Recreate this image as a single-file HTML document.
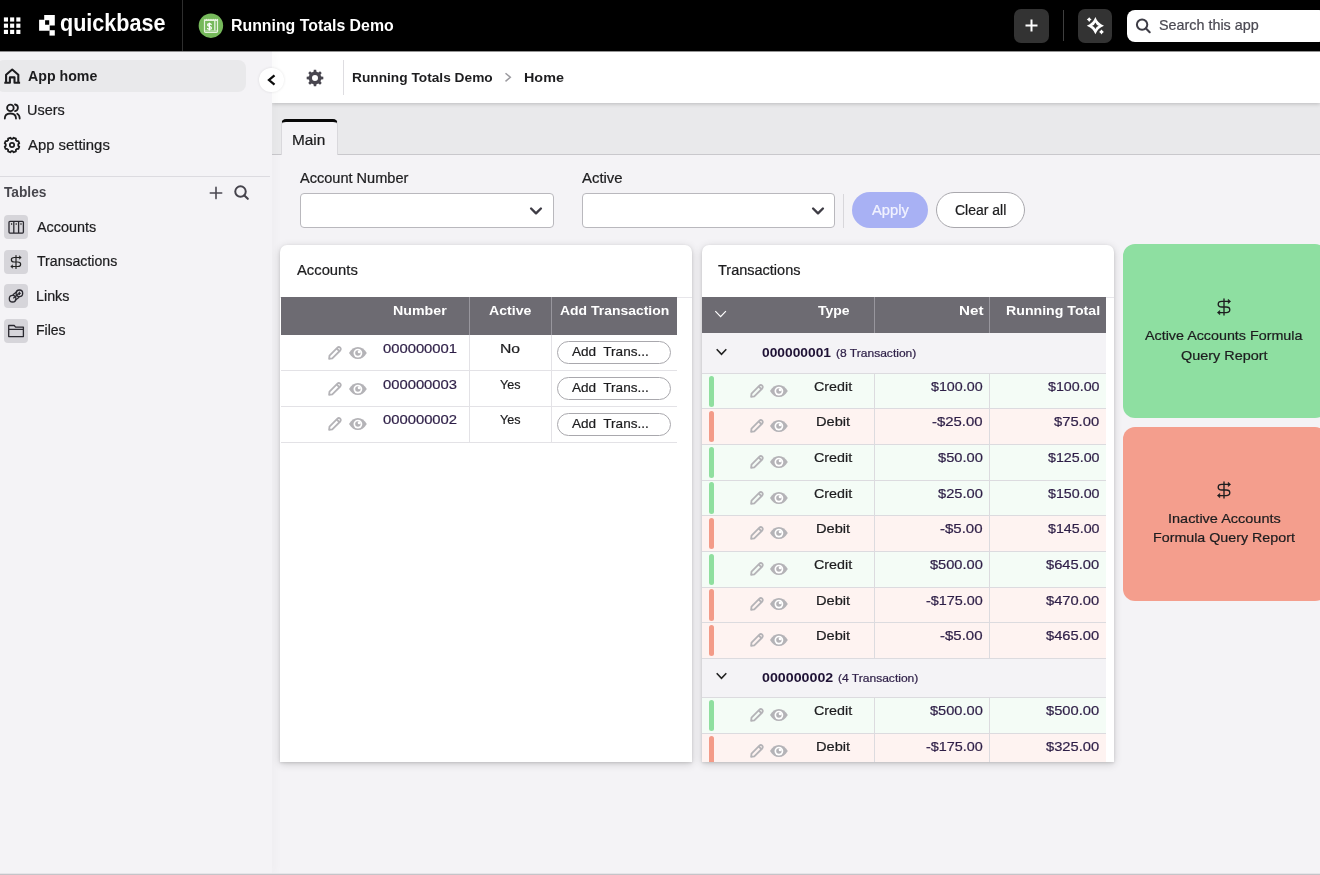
<!DOCTYPE html>
<html lang="en">
<head>
<meta charset="utf-8">
<title>Running Totals Demo</title>
<style>
*{box-sizing:border-box;margin:0;padding:0}
html,body{width:1320px;height:875px;overflow:hidden;background:#f4f3f6;font-family:"Liberation Sans",sans-serif;color:#1d1d1f}
.a{position:absolute}
.t{position:absolute;white-space:nowrap;line-height:1;-webkit-text-stroke:.22px currentColor}
svg{position:absolute;overflow:visible}
#tx{position:absolute;left:0;top:0;width:1320px;height:875px;will-change:transform}
#top{left:0;top:0;width:1320px;height:51px;background:#000}
#side{left:0;top:51px;width:272px;height:824px;background:#f4f3f6}
#sideborder{left:270px;top:51px;width:2px;height:824px;background:#e6e5e9;box-shadow:1px 0 8px rgba(0,0,0,.09)}
#crumb{left:272px;top:51px;width:1048px;height:52px;background:#fff;box-shadow:0 1px 4px rgba(0,0,0,.2)}
#tabbar{left:272px;top:103px;width:1048px;height:52px;background:#e9e9eb;border-bottom:1px solid #c9c8cc}
#bottomline{left:0;top:873px;width:1320px;height:2px;background:linear-gradient(#e6e5e9 0,#e6e5e9 50%,#c5c4c8 50%)}
.card{background:#fff;border-radius:7px 7px 0 0;box-shadow:0 1px 3px rgba(0,0,0,.12),0 2px 9px rgba(0,0,0,.16)}
.th{background:#6d6b72}
.tile{border-radius:12px}
.pill{border:1px solid #a9a8ad;border-radius:18px;background:#fff}
.dd{border:1px solid #b9b8bd;border-radius:4px;background:#fff;width:254px;height:34px;top:193px}
.ib{left:4px;width:24px;height:24px;border-radius:4px;background:#d6d5da}
.hl{height:1px;background:#dddce0}
.vl{width:1px;background:#dddce0}
.gr{background:#f4fcf6}
.rd{background:#fef3f1}
.bar{width:4.5px;border-radius:2.5px}
</style>
</head>
<body>
<div class="a" id="top"></div>
<div class="a" id="tabbar"></div>
<div class="a" id="crumb"></div>
<div class="a" id="sideborder"></div>
<div class="a" id="side"></div>
<svg style="left:0;top:0" width="30" height="51" viewBox="0 0 30 51"><rect x="3.90" y="17.40" width="4.1" height="4.2" fill="#fff"/><rect x="10.10" y="17.40" width="4.1" height="4.2" fill="#fff"/><rect x="16.30" y="17.40" width="4.1" height="4.2" fill="#fff"/><rect x="3.90" y="23.60" width="4.1" height="4.2" fill="#fff"/><rect x="10.10" y="23.60" width="4.1" height="4.2" fill="#fff"/><rect x="16.30" y="23.60" width="4.1" height="4.2" fill="#fff"/><rect x="3.90" y="29.80" width="4.1" height="4.2" fill="#fff"/><rect x="10.10" y="29.80" width="4.1" height="4.2" fill="#fff"/><rect x="16.30" y="29.80" width="4.1" height="4.2" fill="#fff"/></svg>
<svg style="left:39px;top:15px" width="16" height="21" viewBox="39 15 16 21">
<path fill="#fff" fill-rule="evenodd" d="M44.2 15H54.8V25.4H49.7V30.7H39.1V19.8H44.2ZM45.1 20.3V24.7H49.2V20.3Z"/>
<rect fill="#fff" x="49.5" y="30.2" width="5.3" height="5.4"/></svg>
<div class="a" style="left:182px;top:0px;width:1px;height:51px;background:#2e2e2e"></div>
<svg style="left:198px;top:13px" width="26" height="26" viewBox="198 13 26 26">
<circle cx="210.9" cy="25.65" r="12.25" fill="#76b95b"/>
<path fill="none" stroke="#e6f3df" stroke-width="1.2" stroke-linejoin="round" d="M204.5 19.4l1.083 1 1.083-1l1.083 1 1.083-1l1.083 1 1.083-1l1.083 1 1.083-1l1.083 1 1.083-1l1.083 1 1.083-1V31.2Q217.5 32.3 216.4 32.3H205.6Q204.5 32.3 204.5 31.2V19.4"/>
<path fill="none" stroke="#e6f3df" stroke-width="1.1" d="M205 20.4H217"/>
<path fill="none" stroke="#d9edd1" stroke-width=".9" d="M205 30.9H217"/>
<path fill="none" stroke="#d9edd1" stroke-width="1.5" d="M214.8 21V30.6"/>
<path fill="none" stroke="#fff" stroke-width="1.25" stroke-linecap="round" d="M211.2 24.5C210.7 23.5 207.6 23.3 207.6 25 207.600 26.700 211.400 26.100 211.400 27.900 211.400 29.700 208.100 29.500 207.500 28.500M209.400 23.100V29.900"/>
</svg>
<div class="a" style="left:1014px;top:9px;width:34.5px;height:34px;background:#333;border-radius:7px"></div>
<svg style="left:1025px;top:19px" width="13" height="13" viewBox="0 0 13 13"><path d="M6.5 .5v12M.5 6.500h12" stroke="#fff" stroke-width="2" fill="none"/></svg>
<div class="a" style="left:1063px;top:10px;width:1px;height:31px;background:#3f3f3f"></div>
<div class="a" style="left:1078.3px;top:9px;width:34px;height:34px;background:#333;border-radius:7px"></div>
<svg style="left:1085px;top:15px" width="22" height="22" viewBox="1085 15 22 22">
<path fill="#fff" fill-rule="evenodd" d="M1095.4 17.1Q1097.7 23.4 1104.0 25.7Q1097.7 28.0 1095.4 34.3Q1093.1000000000001 28.0 1086.8000000000002 25.7Q1093.1000000000001 23.4 1095.4 17.1ZM1095.4 22.4Q1096.3000000000002 24.8 1098.7 25.7Q1096.3000000000002 26.599999999999998 1095.4 29.0Q1094.5 26.599999999999998 1092.1000000000001 25.7Q1094.5 24.8 1095.4 22.4Z"/>
<path fill="#fff" d="M1089.2 17.200000000000003Q1090.1000000000001 18.700000000000003 1091.6000000000001 19.6Q1090.1000000000001 20.5 1089.2 22.0Q1088.3 20.5 1086.8 19.6Q1088.3 18.700000000000003 1089.2 17.200000000000003ZM1101.5 29.6Q1102.4 31.1 1103.9 32Q1102.4 32.9 1101.5 34.4Q1100.6 32.9 1099.1 32Q1100.6 31.1 1101.5 29.6Z"/>
</svg>
<div class="a" style="left:1127px;top:10px;width:200px;height:31.5px;background:#fff;border-radius:8px"></div>
<svg style="left:1135px;top:18px" width="17" height="17" viewBox="1135 18 17 17"><circle cx="1142.100" cy="24.600" r="5.200" fill="none" stroke="#3d3c45" stroke-width="2"/><path d="M1146 28.600l3.700 3.600" stroke="#3d3c45" stroke-width="2.100" stroke-linecap="round"/></svg>
<div class="a" style="left:-4px;top:60px;width:249.5px;height:32px;background:#e9e9eb;border-radius:8px"></div>
<svg style="left:3px;top:67px" width="18" height="18" viewBox="3 67 18 18">
<path fill="none" stroke="#1d1d1f" stroke-width="2.1" stroke-linejoin="round" d="M6.100 82.800V74.700L12.200 69.500 18.300 74.700V82.800M4.300 82.800H9.900V77.400H14.500V82.800H20.100"/></svg>
<svg style="left:3px;top:102px" width="19" height="18" viewBox="3 102 19 18">
<circle cx="10.400" cy="107.900" r="3.300" fill="none" stroke="#1d1d1f" stroke-width="1.800"/>
<path fill="none" stroke="#1d1d1f" stroke-width="1.800" stroke-linecap="round" d="M4.800 118.600c0-3.300 2.300-5.100 5.600-5.100s5.600 1.800 5.600 5.100M15 104.500c1.900 .300 2.900 1.700 2.900 3.300s-1 3-2.900 3.300M17.200 113.800c1.600.8 2.500 2.400 2.500 4.700"/></svg>
<svg style="left:3.200px;top:135.800px" width="18" height="18" viewBox="-9 -9 18 18">
<path fill="none" stroke="#1d1d1f" stroke-width="1.800" stroke-linejoin="round" d="M6.24 0.84L7.29 1.75L6.39 3.92L5.01 3.82L3.82 5.01L3.92 6.39L1.75 7.29L0.84 6.24L-0.84 6.24L-1.75 7.29L-3.92 6.39L-3.82 5.01L-5.01 3.82L-6.39 3.92L-7.29 1.75L-6.24 0.84L-6.24 -0.84L-7.29 -1.75L-6.39 -3.92L-5.01 -3.82L-3.82 -5.01L-3.92 -6.39L-1.75 -7.29L-0.84 -6.24L0.84 -6.24L1.75 -7.29L3.92 -6.39L3.82 -5.01L5.01 -3.82L6.39 -3.92L7.29 -1.75L6.24 -0.84Z"/>
<circle cx="0" cy="0" r="2.200" fill="none" stroke="#1d1d1f" stroke-width="1.700"/></svg>
<div class="a hl" style="left:0px;top:176px;width:270px;height:1px;background:#dcdbe0"></div>
<svg style="left:208.700px;top:186px" width="14" height="14" viewBox="-7 -7 14 14"><path d="M0 -5.600V5.600M-5.700 0H5.700" stroke="#4a4851" stroke-width="1.600" stroke-linecap="round" fill="none"/></svg>
<svg style="left:233px;top:185px" width="17" height="17" viewBox="233 185 17 17"><circle cx="240.500" cy="191.600" r="5.250" fill="none" stroke="#45434c" stroke-width="2"/><path d="M244.400 195.500l3.400 3.300" stroke="#45434c" stroke-width="2.100" stroke-linecap="round"/></svg>
<div class="a ib" style="left:4px;top:215px;width:24px;height:24px;"></div>
<div class="a ib" style="left:4px;top:249.5px;width:24px;height:24px;"></div>
<div class="a ib" style="left:4px;top:284px;width:24px;height:24px;"></div>
<div class="a ib" style="left:4px;top:318.5px;width:24px;height:24px;"></div>
<svg style="left:4px;top:215px" width="24" height="24" viewBox="0 0 24 24">
<rect x="5" y="6.300" width="14.400" height="11.800" rx="1" fill="none" stroke="#2a2930" stroke-width="1.300"/>
<path d="M9.800 6.300v11.800M14.600 6.300v11.800" stroke="#2a2930" stroke-width="1.300" fill="none"/>
<path d="M7 8.300h1.200v1.400H7zM11.600 8.300h1.200v1.400h-1.200zM16.400 8.300h1.200v1.400h-1.200z" fill="#222"/></svg>
<svg style="left:6.100000000000001px;top:252px" width="20" height="20" viewBox="-10 -10 20 20"><g transform="scale(0.8)">
<path fill="none" stroke="#222" stroke-width="1.5" stroke-linecap="round" stroke-linejoin="round" d="M4.5 -5.600H-2.200C-7 -5.600 -7 0 -2.200 0H2.200C7 0 7 5.600 2.200 5.600H-4.500M0 -8.100V8.100"/>
<path fill="#222" stroke="#222" stroke-width=".5" stroke-linejoin="round" d="M6.700 -5.600L4.200 -7.800V-3.400ZM-6.700 5.600L-4.200 3.400V7.800Z"/></g></svg>
<svg style="left:4px;top:284px" width="24" height="24" viewBox="0 0 24 24">
<g fill="none" stroke="#2a2930" stroke-width="1.300" stroke-linecap="round">
<circle cx="8.600" cy="14.700" r="3.300"/><circle cx="15.400" cy="9.300" r="3.300"/>
<path d="M9.600 13.900l4.800-3.800M11.200 16.200l3.600-2.800M9.200 10.600l3.600-2.800"/>
<path d="M15.400 8v2.600M14.100 9.300h2.600" stroke-width="1.100"/></g></svg>
<svg style="left:4px;top:318.500px" width="24" height="24" viewBox="0 0 24 24">
<path fill="none" stroke="#2a2930" stroke-width="1.300" stroke-linejoin="round" d="M4.700 17.600V6.500H10.200L11.600 8.200H19.400V17.600ZM4.700 10.300H19.400"/></svg>
<div class="a" style="left:259.4px;top:68px;width:24.4px;height:24.2px;background:#fff;border-radius:12.200px;box-shadow:0 0 3px rgba(0,0,0,.10)"></div>
<svg style="left:266px;top:73px" width="12" height="14" viewBox="266 73 12 14"><path d="M274.500 75.300L269 80 274.500 84.700" fill="none" stroke="#0c0c0c" stroke-width="2.300"/></svg>
<svg style="left:306.200px;top:68.700px" width="18" height="18" viewBox="-9 -9 18 18">
<path fill="#48464f" fill-rule="evenodd" d="M1.49 6.22L1.18 8.32L-1.18 8.32L-1.49 6.22L-3.34 5.46L-5.04 6.72L-6.72 5.04L-5.46 3.34L-6.22 1.49L-8.32 1.18L-8.32 -1.18L-6.22 -1.49L-5.46 -3.34L-6.72 -5.04L-5.04 -6.72L-3.34 -5.46L-1.49 -6.22L-1.18 -8.32L1.18 -8.32L1.49 -6.22L3.34 -5.46L5.04 -6.72L6.72 -5.04L5.46 -3.34L6.22 -1.49L8.32 -1.18L8.32 1.18L6.22 1.49L5.46 3.34L6.72 5.04L5.04 6.72L3.34 5.46ZM3.0 0A3.0 3.0 0 1 0 -3.0 0A3.0 3.0 0 1 0 3.0 0Z"/></svg>
<div class="a vl" style="left:343px;top:59.5px;width:1px;height:35px;background:#dedde1"></div>
<svg style="left:503px;top:72px" width="10" height="11" viewBox="503 72 10 11"><path d="M505.500 73.200l4.800 4.100-4.800 4.100" fill="none" stroke="#9b9a9f" stroke-width="1.500"/></svg>
<div class="a" style="left:281px;top:119.4px;width:56.5px;height:35.6px;background:#f4f3f6;border:1px solid #d9d8dc;border-bottom:0;border-top:3px solid #080808;border-radius:5px 5px 0 0"></div>
<div class="a dd" style="left:300px;top:193px;width:254px;height:34.5px;"></div>
<div class="a dd" style="left:582px;top:193px;width:253px;height:34.5px;"></div>
<svg style="left:529.3px;top:204.600px" width="14" height="12" viewBox="-7 -6 14 12"><path d="M-4.900 -2.500L0 2.300 4.900 -2.500" fill="none" stroke="#3e3c45" stroke-width="2.400" stroke-linecap="round" stroke-linejoin="round"/></svg>
<svg style="left:811.2px;top:204.600px" width="14" height="12" viewBox="-7 -6 14 12"><path d="M-4.900 -2.500L0 2.300 4.900 -2.500" fill="none" stroke="#3e3c45" stroke-width="2.400" stroke-linecap="round" stroke-linejoin="round"/></svg>
<div class="a vl" style="left:843px;top:193.5px;width:1px;height:34px;background:#d8d7db"></div>
<div class="a" style="left:852px;top:192px;width:76px;height:36px;background:#a8b1f4;border-radius:18px"></div>
<div class="a pill" style="left:935.5px;top:192px;width:89px;height:36px;"></div>
<div class="a card" style="left:280px;top:244.5px;width:412.4px;height:517.5px;"></div>
<div class="a hl" style="left:280px;top:296.5px;width:412.4px;height:1px;background:#e7e6ea"></div>
<div class="a th" style="left:280.5px;top:297.3px;width:396.3px;height:37.6px;"></div>
<div class="a vl" style="left:469px;top:297.3px;width:1px;height:37.6px;background:#98969d"></div>
<div class="a vl" style="left:551px;top:297.3px;width:1px;height:37.6px;background:#98969d"></div>
<div class="a hl" style="left:280.5px;top:370.0px;width:396.3px;height:1px;background:#e3e2e6"></div>
<svg style="left:327.8px;top:346.1px" width="14" height="14" viewBox="0 0 14 14"><path fill="none" stroke="#b4b3b7" stroke-width="1.800" stroke-linejoin="round" stroke-linecap="round" d="M1.100 12.900L1.500 9.600 9.400 1.700C10.200 .9 11.400 .9 12.200 1.700 13 2.500 13 3.700 12.200 4.500L4.300 12.400ZM8.700 2.500L11.400 5.200"/></svg>
<svg style="left:348.6px;top:347.1px" width="17.800" height="12.100" viewBox="0 0 17.800 12.100"><path fill="#b4b3b7" d="M0 6.050C2.200 2.100 5.200 0 8.900 0S15.600 2.100 17.800 6.050C15.600 10 12.600 12.100 8.900 12.100S2.200 10 0 6.050Z"/><circle cx="8.900" cy="6.050" r="4.400" fill="#fff"/><circle cx="8.900" cy="6.050" r="2.700" fill="#b4b3b7"/><circle cx="10.200" cy="4.700" r="1.500" fill="#fff"/></svg>
<div class="a pill" style="left:557px;top:341px;width:113.5px;height:22.6px;border-radius:11.5px"></div>
<div class="a hl" style="left:280.5px;top:405.7px;width:396.3px;height:1px;background:#e3e2e6"></div>
<svg style="left:327.8px;top:381.7px" width="14" height="14" viewBox="0 0 14 14"><path fill="none" stroke="#b4b3b7" stroke-width="1.800" stroke-linejoin="round" stroke-linecap="round" d="M1.100 12.900L1.500 9.600 9.400 1.700C10.200 .9 11.400 .9 12.200 1.700 13 2.500 13 3.700 12.200 4.500L4.300 12.400ZM8.700 2.500L11.400 5.200"/></svg>
<svg style="left:348.6px;top:382.7px" width="17.800" height="12.100" viewBox="0 0 17.800 12.100"><path fill="#b4b3b7" d="M0 6.050C2.200 2.100 5.200 0 8.900 0S15.600 2.100 17.800 6.050C15.600 10 12.600 12.100 8.900 12.100S2.200 10 0 6.050Z"/><circle cx="8.900" cy="6.050" r="4.400" fill="#fff"/><circle cx="8.900" cy="6.050" r="2.700" fill="#b4b3b7"/><circle cx="10.200" cy="4.700" r="1.500" fill="#fff"/></svg>
<div class="a pill" style="left:557px;top:377px;width:113.5px;height:22.6px;border-radius:11.5px"></div>
<div class="a hl" style="left:280.5px;top:441.5px;width:396.3px;height:1px;background:#e3e2e6"></div>
<svg style="left:327.8px;top:417.4px" width="14" height="14" viewBox="0 0 14 14"><path fill="none" stroke="#b4b3b7" stroke-width="1.800" stroke-linejoin="round" stroke-linecap="round" d="M1.100 12.900L1.500 9.600 9.400 1.700C10.200 .9 11.400 .9 12.200 1.700 13 2.500 13 3.700 12.200 4.500L4.300 12.400ZM8.700 2.500L11.400 5.200"/></svg>
<svg style="left:348.6px;top:418.4px" width="17.800" height="12.100" viewBox="0 0 17.800 12.100"><path fill="#b4b3b7" d="M0 6.050C2.200 2.100 5.200 0 8.900 0S15.600 2.100 17.800 6.050C15.600 10 12.600 12.100 8.900 12.100S2.200 10 0 6.050Z"/><circle cx="8.900" cy="6.050" r="4.400" fill="#fff"/><circle cx="8.900" cy="6.050" r="2.700" fill="#b4b3b7"/><circle cx="10.200" cy="4.700" r="1.500" fill="#fff"/></svg>
<div class="a pill" style="left:557px;top:413px;width:113.5px;height:22.6px;border-radius:11.5px"></div>
<div class="a vl" style="left:469px;top:334.9px;width:1px;height:107.1px;background:#e3e2e6"></div>
<div class="a vl" style="left:551px;top:334.9px;width:1px;height:107.1px;background:#e3e2e6"></div>
<div class="a card" style="left:702px;top:244.5px;width:412px;height:517.5px;overflow:hidden"></div>
<div class="a hl" style="left:702px;top:296.5px;width:412px;height:1px;background:#e7e6ea"></div>
<div class="a th" style="left:702px;top:297.2px;width:404px;height:35.6px;"></div>
<div class="a vl" style="left:874px;top:297.2px;width:1px;height:35.6px;background:#98969d"></div>
<div class="a vl" style="left:989px;top:297.2px;width:1px;height:35.6px;background:#98969d"></div>
<svg style="left:714px;top:309px" width="14" height="10" viewBox="714 309 14 10"><path d="M715.300 311.200l5.300 5.400 5.300-5.400" fill="none" stroke="#fff" stroke-width="1.200"/></svg>
<div class="a" style="left:702px;top:332.8px;width:404px;height:40.5px;background:#f4f3f6"></div>
<svg style="left:715px;top:346.6px" width="13" height="10" viewBox="-6.500 -5 13 10"><path d="M-4.800 -2.700L0 2.400 4.800 -2.700" fill="none" stroke="#222" stroke-width="1.600"/></svg>
<div class="a gr" style="left:702px;top:373.3px;width:404px;height:35.6px;"></div>
<div class="a bar" style="left:709.4px;top:375.5px;width:4.7px;height:31.4px;background:#8fdf9f;"></div>
<svg style="left:749.5px;top:383.7px" width="14" height="14" viewBox="0 0 14 14"><path fill="none" stroke="#b4b3b7" stroke-width="1.800" stroke-linejoin="round" stroke-linecap="round" d="M1.100 12.900L1.500 9.600 9.400 1.700C10.200 .9 11.400 .9 12.200 1.700 13 2.500 13 3.700 12.200 4.500L4.300 12.400ZM8.700 2.500L11.400 5.200"/></svg>
<svg style="left:770.3px;top:384.7px" width="17.800" height="12.100" viewBox="0 0 17.800 12.100"><path fill="#b4b3b7" d="M0 6.050C2.200 2.100 5.200 0 8.900 0S15.600 2.100 17.800 6.050C15.600 10 12.600 12.100 8.900 12.100S2.200 10 0 6.050Z"/><circle cx="8.900" cy="6.050" r="4.400" fill="#fff"/><circle cx="8.900" cy="6.050" r="2.700" fill="#b4b3b7"/><circle cx="10.200" cy="4.700" r="1.500" fill="#fff"/></svg>
<div class="a rd" style="left:702px;top:408.9px;width:404px;height:35.6px;"></div>
<div class="a bar" style="left:709.4px;top:411.1px;width:4.7px;height:31.4px;background:#f39b88;"></div>
<svg style="left:749.5px;top:419.3px" width="14" height="14" viewBox="0 0 14 14"><path fill="none" stroke="#b4b3b7" stroke-width="1.800" stroke-linejoin="round" stroke-linecap="round" d="M1.100 12.900L1.500 9.600 9.400 1.700C10.200 .9 11.400 .9 12.200 1.700 13 2.500 13 3.700 12.200 4.500L4.300 12.400ZM8.700 2.500L11.400 5.200"/></svg>
<svg style="left:770.3px;top:420.3px" width="17.800" height="12.100" viewBox="0 0 17.800 12.100"><path fill="#b4b3b7" d="M0 6.050C2.200 2.100 5.200 0 8.900 0S15.600 2.100 17.800 6.050C15.600 10 12.600 12.100 8.900 12.100S2.200 10 0 6.050Z"/><circle cx="8.900" cy="6.050" r="4.400" fill="#fff"/><circle cx="8.900" cy="6.050" r="2.700" fill="#b4b3b7"/><circle cx="10.200" cy="4.700" r="1.500" fill="#fff"/></svg>
<div class="a gr" style="left:702px;top:444.5px;width:404px;height:35.6px;"></div>
<div class="a bar" style="left:709.4px;top:446.7px;width:4.7px;height:31.4px;background:#8fdf9f;"></div>
<svg style="left:749.5px;top:454.9px" width="14" height="14" viewBox="0 0 14 14"><path fill="none" stroke="#b4b3b7" stroke-width="1.800" stroke-linejoin="round" stroke-linecap="round" d="M1.100 12.900L1.500 9.600 9.400 1.700C10.200 .9 11.400 .9 12.200 1.700 13 2.500 13 3.700 12.200 4.500L4.300 12.400ZM8.700 2.500L11.400 5.200"/></svg>
<svg style="left:770.3px;top:455.9px" width="17.800" height="12.100" viewBox="0 0 17.800 12.100"><path fill="#b4b3b7" d="M0 6.050C2.200 2.100 5.200 0 8.900 0S15.600 2.100 17.800 6.050C15.600 10 12.600 12.100 8.900 12.100S2.200 10 0 6.050Z"/><circle cx="8.900" cy="6.050" r="4.400" fill="#fff"/><circle cx="8.900" cy="6.050" r="2.700" fill="#b4b3b7"/><circle cx="10.200" cy="4.700" r="1.500" fill="#fff"/></svg>
<div class="a gr" style="left:702px;top:480.1px;width:404px;height:35.6px;"></div>
<div class="a bar" style="left:709.4px;top:482.3px;width:4.7px;height:31.4px;background:#8fdf9f;"></div>
<svg style="left:749.5px;top:490.5px" width="14" height="14" viewBox="0 0 14 14"><path fill="none" stroke="#b4b3b7" stroke-width="1.800" stroke-linejoin="round" stroke-linecap="round" d="M1.100 12.900L1.500 9.600 9.400 1.700C10.200 .9 11.400 .9 12.200 1.700 13 2.500 13 3.700 12.200 4.500L4.300 12.400ZM8.700 2.500L11.400 5.200"/></svg>
<svg style="left:770.3px;top:491.5px" width="17.800" height="12.100" viewBox="0 0 17.800 12.100"><path fill="#b4b3b7" d="M0 6.050C2.200 2.100 5.200 0 8.900 0S15.600 2.100 17.800 6.050C15.600 10 12.600 12.100 8.900 12.100S2.200 10 0 6.050Z"/><circle cx="8.900" cy="6.050" r="4.400" fill="#fff"/><circle cx="8.900" cy="6.050" r="2.700" fill="#b4b3b7"/><circle cx="10.200" cy="4.700" r="1.500" fill="#fff"/></svg>
<div class="a rd" style="left:702px;top:515.7px;width:404px;height:35.7px;"></div>
<div class="a bar" style="left:709.4px;top:517.9px;width:4.7px;height:31.5px;background:#f39b88;"></div>
<svg style="left:749.5px;top:526.1px" width="14" height="14" viewBox="0 0 14 14"><path fill="none" stroke="#b4b3b7" stroke-width="1.800" stroke-linejoin="round" stroke-linecap="round" d="M1.100 12.900L1.500 9.600 9.400 1.700C10.200 .9 11.400 .9 12.200 1.700 13 2.500 13 3.700 12.200 4.500L4.300 12.400ZM8.700 2.500L11.400 5.200"/></svg>
<svg style="left:770.3px;top:527.1px" width="17.800" height="12.100" viewBox="0 0 17.800 12.100"><path fill="#b4b3b7" d="M0 6.050C2.200 2.100 5.200 0 8.900 0S15.600 2.100 17.800 6.050C15.600 10 12.600 12.100 8.900 12.100S2.200 10 0 6.050Z"/><circle cx="8.900" cy="6.050" r="4.400" fill="#fff"/><circle cx="8.900" cy="6.050" r="2.700" fill="#b4b3b7"/><circle cx="10.200" cy="4.700" r="1.500" fill="#fff"/></svg>
<div class="a gr" style="left:702px;top:551.4px;width:404px;height:35.6px;"></div>
<div class="a bar" style="left:709.4px;top:553.6px;width:4.7px;height:31.4px;background:#8fdf9f;"></div>
<svg style="left:749.5px;top:561.8px" width="14" height="14" viewBox="0 0 14 14"><path fill="none" stroke="#b4b3b7" stroke-width="1.800" stroke-linejoin="round" stroke-linecap="round" d="M1.100 12.900L1.500 9.600 9.400 1.700C10.200 .9 11.400 .9 12.200 1.700 13 2.500 13 3.700 12.200 4.500L4.300 12.400ZM8.700 2.500L11.400 5.200"/></svg>
<svg style="left:770.3px;top:562.8px" width="17.800" height="12.100" viewBox="0 0 17.800 12.100"><path fill="#b4b3b7" d="M0 6.050C2.200 2.100 5.200 0 8.900 0S15.600 2.100 17.800 6.050C15.600 10 12.600 12.100 8.900 12.100S2.200 10 0 6.050Z"/><circle cx="8.900" cy="6.050" r="4.400" fill="#fff"/><circle cx="8.900" cy="6.050" r="2.700" fill="#b4b3b7"/><circle cx="10.200" cy="4.700" r="1.500" fill="#fff"/></svg>
<div class="a rd" style="left:702px;top:587.0px;width:404px;height:35.6px;"></div>
<div class="a bar" style="left:709.4px;top:589.2px;width:4.7px;height:31.4px;background:#f39b88;"></div>
<svg style="left:749.5px;top:597.4px" width="14" height="14" viewBox="0 0 14 14"><path fill="none" stroke="#b4b3b7" stroke-width="1.800" stroke-linejoin="round" stroke-linecap="round" d="M1.100 12.900L1.500 9.600 9.400 1.700C10.200 .9 11.400 .9 12.200 1.700 13 2.500 13 3.700 12.200 4.500L4.300 12.400ZM8.700 2.500L11.400 5.200"/></svg>
<svg style="left:770.3px;top:598.4px" width="17.800" height="12.100" viewBox="0 0 17.800 12.100"><path fill="#b4b3b7" d="M0 6.050C2.200 2.100 5.200 0 8.900 0S15.600 2.100 17.800 6.050C15.600 10 12.600 12.100 8.900 12.100S2.200 10 0 6.050Z"/><circle cx="8.900" cy="6.050" r="4.400" fill="#fff"/><circle cx="8.900" cy="6.050" r="2.700" fill="#b4b3b7"/><circle cx="10.200" cy="4.700" r="1.500" fill="#fff"/></svg>
<div class="a rd" style="left:702px;top:622.6px;width:404px;height:35.6px;"></div>
<div class="a bar" style="left:709.4px;top:624.8px;width:4.7px;height:31.4px;background:#f39b88;"></div>
<svg style="left:749.5px;top:633.0px" width="14" height="14" viewBox="0 0 14 14"><path fill="none" stroke="#b4b3b7" stroke-width="1.800" stroke-linejoin="round" stroke-linecap="round" d="M1.100 12.900L1.500 9.600 9.400 1.700C10.200 .9 11.400 .9 12.200 1.700 13 2.500 13 3.700 12.200 4.500L4.300 12.400ZM8.700 2.500L11.400 5.200"/></svg>
<svg style="left:770.3px;top:634.0px" width="17.800" height="12.100" viewBox="0 0 17.800 12.100"><path fill="#b4b3b7" d="M0 6.050C2.200 2.100 5.200 0 8.900 0S15.600 2.100 17.800 6.050C15.600 10 12.600 12.100 8.900 12.100S2.200 10 0 6.050Z"/><circle cx="8.900" cy="6.050" r="4.400" fill="#fff"/><circle cx="8.900" cy="6.050" r="2.700" fill="#b4b3b7"/><circle cx="10.200" cy="4.700" r="1.500" fill="#fff"/></svg>
<div class="a" style="left:702px;top:658.2px;width:404px;height:39.4px;background:#f4f3f6"></div>
<svg style="left:715px;top:671.2px" width="13" height="10" viewBox="-6.500 -5 13 10"><path d="M-4.800 -2.700L0 2.400 4.800 -2.700" fill="none" stroke="#222" stroke-width="1.600"/></svg>
<div class="a gr" style="left:702px;top:697.6px;width:404px;height:35.7px;"></div>
<div class="a bar" style="left:709.4px;top:699.8px;width:4.7px;height:31.5px;background:#8fdf9f;"></div>
<svg style="left:749.5px;top:708.0px" width="14" height="14" viewBox="0 0 14 14"><path fill="none" stroke="#b4b3b7" stroke-width="1.800" stroke-linejoin="round" stroke-linecap="round" d="M1.100 12.900L1.500 9.600 9.400 1.700C10.200 .9 11.400 .9 12.200 1.700 13 2.500 13 3.700 12.200 4.500L4.300 12.400ZM8.700 2.500L11.400 5.200"/></svg>
<svg style="left:770.3px;top:709.0px" width="17.800" height="12.100" viewBox="0 0 17.800 12.100"><path fill="#b4b3b7" d="M0 6.050C2.200 2.100 5.200 0 8.900 0S15.600 2.100 17.800 6.050C15.600 10 12.600 12.100 8.900 12.100S2.200 10 0 6.050Z"/><circle cx="8.900" cy="6.050" r="4.400" fill="#fff"/><circle cx="8.900" cy="6.050" r="2.700" fill="#b4b3b7"/><circle cx="10.200" cy="4.700" r="1.500" fill="#fff"/></svg>
<div class="a rd" style="left:702px;top:733.3px;width:404px;height:28.7px;"></div>
<div class="a bar" style="left:709.4px;top:735.5px;width:4.7px;height:26.5px;background:#f39b88;border-radius:2.5px 2.5px 0 0;"></div>
<svg style="left:749.5px;top:743.7px" width="14" height="14" viewBox="0 0 14 14"><path fill="none" stroke="#b4b3b7" stroke-width="1.800" stroke-linejoin="round" stroke-linecap="round" d="M1.100 12.900L1.500 9.600 9.400 1.700C10.200 .9 11.400 .9 12.200 1.700 13 2.500 13 3.700 12.200 4.500L4.300 12.400ZM8.700 2.500L11.400 5.200"/></svg>
<svg style="left:770.3px;top:744.7px" width="17.800" height="12.100" viewBox="0 0 17.800 12.100"><path fill="#b4b3b7" d="M0 6.050C2.200 2.100 5.200 0 8.900 0S15.600 2.100 17.800 6.050C15.600 10 12.600 12.100 8.900 12.100S2.200 10 0 6.050Z"/><circle cx="8.900" cy="6.050" r="4.400" fill="#fff"/><circle cx="8.900" cy="6.050" r="2.700" fill="#b4b3b7"/><circle cx="10.200" cy="4.700" r="1.500" fill="#fff"/></svg>
<div class="a tile" style="left:1123px;top:244px;width:204px;height:173.5px;background:#8edfa1"></div>
<div class="a tile" style="left:1123px;top:427px;width:204px;height:173.5px;background:#f49e8d"></div>
<svg style="left:1214.4px;top:297.4px" width="20" height="20" viewBox="-10 -10 20 20"><g transform="scale(1.0)">
<path fill="none" stroke="#1d1d1f" stroke-width="1.35" stroke-linecap="round" stroke-linejoin="round" d="M4.5 -5.600H-2.200C-7 -5.600 -7 0 -2.200 0H2.200C7 0 7 5.600 2.200 5.600H-4.500M0 -8.100V8.100"/>
<path fill="#1d1d1f" stroke="#1d1d1f" stroke-width=".5" stroke-linejoin="round" d="M6.700 -5.600L4.200 -7.800V-3.400ZM-6.700 5.600L-4.200 3.400V7.800Z"/></g></svg>
<svg style="left:1214.4px;top:479.8px" width="20" height="20" viewBox="-10 -10 20 20"><g transform="scale(1.0)">
<path fill="none" stroke="#1d1d1f" stroke-width="1.35" stroke-linecap="round" stroke-linejoin="round" d="M4.5 -5.600H-2.200C-7 -5.600 -7 0 -2.200 0H2.200C7 0 7 5.600 2.200 5.600H-4.500M0 -8.100V8.100"/>
<path fill="#1d1d1f" stroke="#1d1d1f" stroke-width=".5" stroke-linejoin="round" d="M6.700 -5.600L4.200 -7.800V-3.400ZM-6.700 5.600L-4.200 3.400V7.800Z"/></g></svg>
<div class="a" id="bottomline"></div>
<div class="a" style="left:0px;top:51px;width:1320px;height:1px;background:rgba(0,0,0,.42)"></div>
<div class="a hl" style="left:702px;top:372.8px;width:404px;height:1px;background:#dcdbdf"></div>
<div class="a hl" style="left:702px;top:408.4px;width:404px;height:1px;background:#dcdbdf"></div>
<div class="a vl" style="left:874px;top:373.3px;width:1px;height:35.6px;background:#dcdbdf"></div>
<div class="a vl" style="left:989px;top:373.3px;width:1px;height:35.6px;background:#dcdbdf"></div>
<div class="a hl" style="left:702px;top:444.0px;width:404px;height:1px;background:#dcdbdf"></div>
<div class="a vl" style="left:874px;top:408.9px;width:1px;height:35.6px;background:#dcdbdf"></div>
<div class="a vl" style="left:989px;top:408.9px;width:1px;height:35.6px;background:#dcdbdf"></div>
<div class="a hl" style="left:702px;top:479.6px;width:404px;height:1px;background:#dcdbdf"></div>
<div class="a vl" style="left:874px;top:444.5px;width:1px;height:35.6px;background:#dcdbdf"></div>
<div class="a vl" style="left:989px;top:444.5px;width:1px;height:35.6px;background:#dcdbdf"></div>
<div class="a hl" style="left:702px;top:515.2px;width:404px;height:1px;background:#dcdbdf"></div>
<div class="a vl" style="left:874px;top:480.1px;width:1px;height:35.6px;background:#dcdbdf"></div>
<div class="a vl" style="left:989px;top:480.1px;width:1px;height:35.6px;background:#dcdbdf"></div>
<div class="a hl" style="left:702px;top:550.9px;width:404px;height:1px;background:#dcdbdf"></div>
<div class="a vl" style="left:874px;top:515.7px;width:1px;height:35.7px;background:#dcdbdf"></div>
<div class="a vl" style="left:989px;top:515.7px;width:1px;height:35.7px;background:#dcdbdf"></div>
<div class="a hl" style="left:702px;top:586.5px;width:404px;height:1px;background:#dcdbdf"></div>
<div class="a vl" style="left:874px;top:551.4px;width:1px;height:35.6px;background:#dcdbdf"></div>
<div class="a vl" style="left:989px;top:551.4px;width:1px;height:35.6px;background:#dcdbdf"></div>
<div class="a hl" style="left:702px;top:622.1px;width:404px;height:1px;background:#dcdbdf"></div>
<div class="a vl" style="left:874px;top:587.0px;width:1px;height:35.6px;background:#dcdbdf"></div>
<div class="a vl" style="left:989px;top:587.0px;width:1px;height:35.6px;background:#dcdbdf"></div>
<div class="a hl" style="left:702px;top:657.7px;width:404px;height:1px;background:#dcdbdf"></div>
<div class="a vl" style="left:874px;top:622.6px;width:1px;height:35.6px;background:#dcdbdf"></div>
<div class="a vl" style="left:989px;top:622.6px;width:1px;height:35.6px;background:#dcdbdf"></div>
<div class="a hl" style="left:702px;top:697.1px;width:404px;height:1px;background:#dcdbdf"></div>
<div class="a hl" style="left:702px;top:732.8px;width:404px;height:1px;background:#dcdbdf"></div>
<div class="a vl" style="left:874px;top:697.6px;width:1px;height:35.7px;background:#dcdbdf"></div>
<div class="a vl" style="left:989px;top:697.6px;width:1px;height:35.7px;background:#dcdbdf"></div>
<div class="a vl" style="left:874px;top:733.3px;width:1px;height:28.7px;background:#dcdbdf"></div>
<div class="a vl" style="left:989px;top:733.3px;width:1px;height:28.7px;background:#dcdbdf"></div>
<!-- text -->
<div id="tx">
<span class="t" style="top:11.00px;font-size:24px;font-weight:700;-webkit-text-stroke:0;color:#fff;transform:scaleX(0.8991);transform-origin:0 0;left:59.80px;">quickbase</span>
<span class="t" style="top:18.00px;font-size:16px;font-weight:700;-webkit-text-stroke:0;color:#fff;transform:scaleX(0.9911);transform-origin:0 0;left:230.99px;">Running Totals Demo</span>
<span class="t" style="top:18.00px;font-size:14.5px;color:#4a4952;transform:scaleX(0.9896);transform-origin:0 0;left:1158.89px;">Search this app</span>
<span class="t" style="top:69.00px;font-size:14.5px;font-weight:700;-webkit-text-stroke:0;transform:scaleX(0.9772);transform-origin:0 0;left:27.77px;">App home</span>
<span class="t" style="top:103.00px;font-size:14.5px;transform:scaleX(0.9962);transform-origin:0 0;left:27.11px;">Users</span>
<span class="t" style="top:138.00px;font-size:14.5px;transform:scaleX(1.0254);transform-origin:0 0;left:28.24px;">App settings</span>
<span class="t" style="top:185.00px;font-size:14px;font-weight:700;-webkit-text-stroke:0;color:#47464d;transform:scaleX(0.9783);transform-origin:0 0;left:4.06px;">Tables</span>
<span class="t" style="top:220.00px;font-size:14px;transform:scaleX(1.0279);transform-origin:0 0;left:36.80px;">Accounts</span>
<span class="t" style="top:254.00px;font-size:14px;transform:scaleX(1.0072);transform-origin:0 0;left:36.80px;">Transactions</span>
<span class="t" style="top:289.00px;font-size:14px;transform:scaleX(1.0224);transform-origin:0 0;left:35.87px;">Links</span>
<span class="t" style="top:323.00px;font-size:14px;transform:scaleX(1.0020);transform-origin:0 0;left:35.89px;">Files</span>
<span class="t" style="top:71.00px;font-size:13.5px;font-weight:700;-webkit-text-stroke:0;transform:scaleX(1.0161);transform-origin:0 0;left:351.98px;">Running Totals Demo</span>
<span class="t" style="top:71.00px;font-size:13.5px;font-weight:700;-webkit-text-stroke:0;transform:scaleX(1.0628);transform-origin:0 0;left:524.25px;">Home</span>
<span class="t" style="top:133.00px;font-size:14px;transform:scaleX(1.0983);transform-origin:0 0;left:292.04px;">Main</span>
<span class="t" style="top:171.00px;font-size:14px;transform:scaleX(1.0391);transform-origin:0 0;left:300.48px;">Account Number</span>
<span class="t" style="top:171.00px;font-size:14px;transform:scaleX(1.0641);transform-origin:0 0;left:581.87px;">Active</span>
<span class="t" style="top:203.00px;font-size:14px;color:#f1f2fe;transform:scaleX(1.0505);transform-origin:0 0;left:871.90px;">Apply</span>
<span class="t" style="top:203.00px;font-size:14px;transform:scaleX(0.9978);transform-origin:0 0;left:955.40px;">Clear all</span>
<span class="t" style="top:263.00px;font-size:14px;transform:scaleX(1.0556);transform-origin:0 0;left:297.24px;">Accounts</span>
<span class="t" style="top:304.00px;font-size:13.5px;font-weight:700;-webkit-text-stroke:0;color:#fff;transform:scaleX(1.0532);transform-origin:0 0;left:393.42px;">Number</span>
<span class="t" style="top:304.00px;font-size:13.5px;font-weight:700;-webkit-text-stroke:0;color:#fff;transform:scaleX(1.0453);transform-origin:0 0;left:489.04px;">Active</span>
<span class="t" style="top:304.00px;font-size:13.5px;font-weight:700;-webkit-text-stroke:0;color:#fff;transform:scaleX(1.0332);transform-origin:0 0;left:559.67px;">Add Transaction</span>
<span class="t" style="top:342.00px;font-size:13.5px;color:#2e1f47;transform:scaleX(1.0952);transform-origin:0 0;left:383.49px;">000000001</span>
<span class="t" style="top:342.00px;font-size:13.5px;transform:scaleX(1.1627);transform-origin:0 0;left:500.05px;">No</span>
<span class="t" style="top:345.00px;font-size:13.5px;word-spacing:3.600px;transform:scaleX(1.0052);transform-origin:0 0;left:572.45px;">Add Trans...</span>
<span class="t" style="top:378.00px;font-size:13.5px;color:#2e1f47;transform:scaleX(1.0951);transform-origin:0 0;left:383.49px;">000000003</span>
<span class="t" style="top:378.00px;font-size:13.5px;transform:scaleX(0.9315);transform-origin:0 0;left:500.05px;">Yes</span>
<span class="t" style="top:381.00px;font-size:13.5px;word-spacing:3.600px;transform:scaleX(1.0052);transform-origin:0 0;left:572.45px;">Add Trans...</span>
<span class="t" style="top:413.00px;font-size:13.5px;color:#2e1f47;transform:scaleX(1.0957);transform-origin:0 0;left:383.49px;">000000002</span>
<span class="t" style="top:413.00px;font-size:13.5px;transform:scaleX(0.9315);transform-origin:0 0;left:500.05px;">Yes</span>
<span class="t" style="top:417.00px;font-size:13.5px;word-spacing:3.600px;transform:scaleX(1.0052);transform-origin:0 0;left:572.45px;">Add Trans...</span>
<span class="t" style="top:263.00px;font-size:14px;transform:scaleX(1.0354);transform-origin:0 0;left:718.15px;">Transactions</span>
<span class="t" style="top:304.00px;font-size:13.5px;font-weight:700;-webkit-text-stroke:0;color:#fff;transform:scaleX(1.0371);transform-origin:0 0;left:818.18px;">Type</span>
<span class="t" style="top:304.00px;font-size:13.5px;font-weight:700;-webkit-text-stroke:0;color:#fff;transform:scaleX(1.1242);transform-origin:0 0;left:959.29px;">Net</span>
<span class="t" style="top:304.00px;font-size:13.5px;font-weight:700;-webkit-text-stroke:0;color:#fff;transform:scaleX(1.0490);transform-origin:0 0;left:1006.32px;">Running Total</span>
<span class="t" style="top:346.00px;font-size:13px;font-weight:700;-webkit-text-stroke:0;color:#1f1235;transform:scaleX(1.0597);transform-origin:0 0;left:762.12px;">000000001</span>
<span class="t" style="top:348.00px;font-size:11px;color:#2e1f47;transform:scaleX(1.0947);transform-origin:0 0;left:835.67px;">(8 Transaction)</span>
<span class="t" style="top:671.00px;font-size:13px;font-weight:700;-webkit-text-stroke:0;color:#1f1235;transform:scaleX(1.0951);transform-origin:0 0;left:761.93px;">000000002</span>
<span class="t" style="top:673.00px;font-size:11px;color:#2e1f47;transform:scaleX(1.0947);transform-origin:0 0;left:837.89px;">(4 Transaction)</span>
<span class="t" style="top:380.00px;font-size:13.5px;transform:scaleX(1.0586);transform-origin:0 0;left:814.00px;">Credit</span>
<span class="t" style="top:380.00px;font-size:13.5px;color:#2e1f47;transform:scaleX(1.0566);transform-origin:0 0;left:931.32px;">$100.00</span>
<span class="t" style="top:380.00px;font-size:13.5px;color:#2e1f47;transform:scaleX(1.0557);transform-origin:0 0;left:1047.87px;">$100.00</span>
<span class="t" style="top:415.00px;font-size:13.5px;transform:scaleX(1.0833);transform-origin:0 0;left:815.94px;">Debit</span>
<span class="t" style="top:415.00px;font-size:13.5px;color:#2e1f47;transform:scaleX(1.1046);transform-origin:0 0;left:932.07px;">-$25.00</span>
<span class="t" style="top:415.00px;font-size:13.5px;color:#2e1f47;transform:scaleX(1.0926);transform-origin:0 0;left:1054.10px;">$75.00</span>
<span class="t" style="top:451.00px;font-size:13.5px;transform:scaleX(1.0586);transform-origin:0 0;left:814.00px;">Credit</span>
<span class="t" style="top:451.00px;font-size:13.5px;color:#2e1f47;transform:scaleX(1.0853);transform-origin:0 0;left:937.88px;">$50.00</span>
<span class="t" style="top:451.00px;font-size:13.5px;color:#2e1f47;transform:scaleX(1.0558);transform-origin:0 0;left:1047.87px;">$125.00</span>
<span class="t" style="top:487.00px;font-size:13.5px;transform:scaleX(1.0586);transform-origin:0 0;left:814.00px;">Credit</span>
<span class="t" style="top:487.00px;font-size:13.5px;color:#2e1f47;transform:scaleX(1.0853);transform-origin:0 0;left:937.88px;">$25.00</span>
<span class="t" style="top:487.00px;font-size:13.5px;color:#2e1f47;transform:scaleX(1.0557);transform-origin:0 0;left:1047.87px;">$150.00</span>
<span class="t" style="top:522.00px;font-size:13.5px;transform:scaleX(1.0833);transform-origin:0 0;left:815.94px;">Debit</span>
<span class="t" style="top:522.00px;font-size:13.5px;color:#2e1f47;transform:scaleX(1.1109);transform-origin:0 0;left:940.28px;">-$5.00</span>
<span class="t" style="top:522.00px;font-size:13.5px;color:#2e1f47;transform:scaleX(1.0565);transform-origin:0 0;left:1048.06px;">$145.00</span>
<span class="t" style="top:558.00px;font-size:13.5px;transform:scaleX(1.0586);transform-origin:0 0;left:814.00px;">Credit</span>
<span class="t" style="top:558.00px;font-size:13.5px;color:#2e1f47;transform:scaleX(1.0821);transform-origin:0 0;left:929.88px;">$500.00</span>
<span class="t" style="top:558.00px;font-size:13.5px;color:#2e1f47;transform:scaleX(1.0888);transform-origin:0 0;left:1046.30px;">$645.00</span>
<span class="t" style="top:594.00px;font-size:13.5px;transform:scaleX(1.0833);transform-origin:0 0;left:815.94px;">Debit</span>
<span class="t" style="top:594.00px;font-size:13.5px;color:#2e1f47;transform:scaleX(1.0653);transform-origin:0 0;left:926.26px;">-$175.00</span>
<span class="t" style="top:594.00px;font-size:13.5px;color:#2e1f47;transform:scaleX(1.0886);transform-origin:0 0;left:1046.30px;">$470.00</span>
<span class="t" style="top:629.00px;font-size:13.5px;transform:scaleX(1.0833);transform-origin:0 0;left:815.94px;">Debit</span>
<span class="t" style="top:629.00px;font-size:13.5px;color:#2e1f47;transform:scaleX(1.1109);transform-origin:0 0;left:940.28px;">-$5.00</span>
<span class="t" style="top:629.00px;font-size:13.5px;color:#2e1f47;transform:scaleX(1.0886);transform-origin:0 0;left:1046.30px;">$465.00</span>
<span class="t" style="top:704.00px;font-size:13.5px;transform:scaleX(1.0586);transform-origin:0 0;left:814.00px;">Credit</span>
<span class="t" style="top:704.00px;font-size:13.5px;color:#2e1f47;transform:scaleX(1.0821);transform-origin:0 0;left:929.88px;">$500.00</span>
<span class="t" style="top:704.00px;font-size:13.5px;color:#2e1f47;transform:scaleX(1.0888);transform-origin:0 0;left:1046.30px;">$500.00</span>
<span class="t" style="top:740.00px;font-size:13.5px;transform:scaleX(1.0833);transform-origin:0 0;left:815.94px;">Debit</span>
<span class="t" style="top:740.00px;font-size:13.5px;color:#2e1f47;transform:scaleX(1.0653);transform-origin:0 0;left:926.26px;">-$175.00</span>
<span class="t" style="top:740.00px;font-size:13.5px;color:#2e1f47;transform:scaleX(1.0886);transform-origin:0 0;left:1046.30px;">$325.00</span>
<span class="t" style="top:329.00px;font-size:13.5px;transform:scaleX(1.0595);transform-origin:0 0;left:1145.18px;">Active Accounts Formula</span>
<span class="t" style="top:349.00px;font-size:13.5px;transform:scaleX(1.0671);transform-origin:0 0;left:1180.93px;">Query Report</span>
<span class="t" style="top:512.00px;font-size:13.5px;transform:scaleX(1.0727);transform-origin:0 0;left:1167.77px;">Inactive Accounts</span>
<span class="t" style="top:531.00px;font-size:13.5px;transform:scaleX(1.0562);transform-origin:0 0;left:1153.36px;">Formula Query Report</span>
</div>
</body>
</html>
